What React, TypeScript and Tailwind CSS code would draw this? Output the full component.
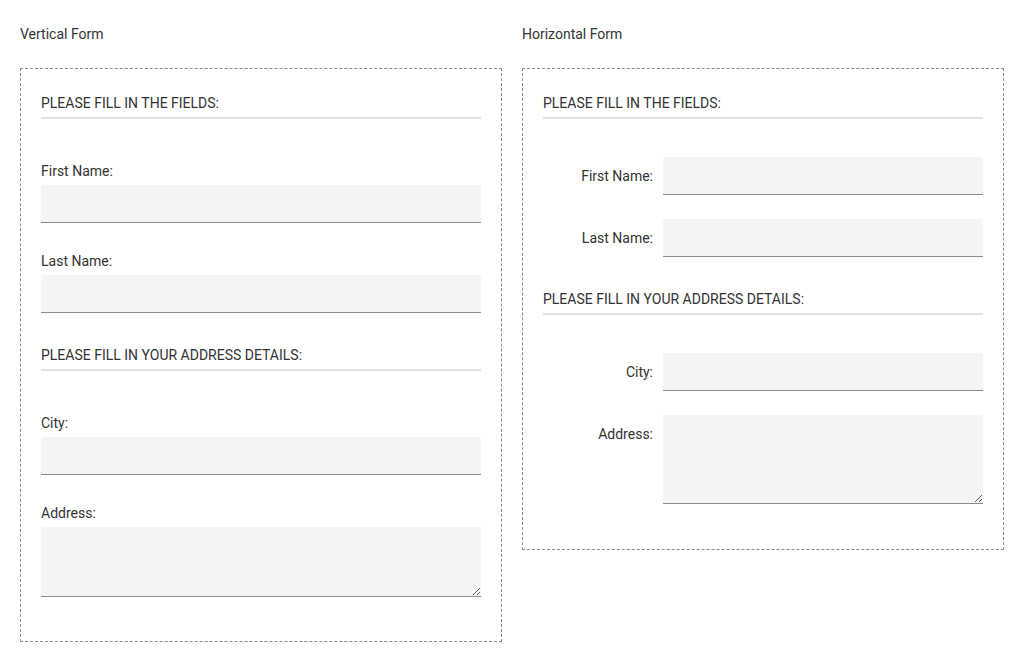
import React from 'react';

const inputCls =
  'block w-full h-[38px] bg-[#f4f4f4] rounded-t-[3px] border-b border-[#8d8d8d] px-3 text-sm outline-none';
const areaCls =
  'block w-full bg-[#f4f4f4] rounded-t-[3px] border-b border-[#8d8d8d] px-3 py-2 text-sm outline-none';

const Heading: React.FC<{ children: React.ReactNode; className?: string }> = ({ children, className = '' }) => (
  <div className={`leading-5 pb-[4px] border-b-2 border-[#e0e0e0] uppercase ${className}`}>{children}</div>
);

const VField: React.FC<{ label: string; area?: boolean; className?: string }> = ({ label, area, className = '' }) => (
  <div className={className}>
    <label className="block leading-5 mb-[4px]">{label}</label>
    {area ? <textarea className={`${areaCls} h-[70px]`} /> : <input className={inputCls} />}
  </div>
);

const HField: React.FC<{ label: string; area?: boolean; className?: string }> = ({ label, area, className = '' }) => (
  <div className={`flex items-start gap-[10px] ${className}`}>
    <label className="w-[110px] shrink-0 text-right leading-[38px]">{label}</label>
    {area ? <textarea className={`${areaCls} h-[89px]`} /> : <input className={inputCls} />}
  </div>
);

export default function App() {
  return (
    <div
      className="min-h-screen bg-white text-[#333] text-sm px-5 pt-6"
      style={{ fontFamily: 'Roboto, "Liberation Sans", sans-serif' }}
    >
      <div className="grid grid-cols-2 gap-5 items-start">
        <div>
          <div className="leading-5">Vertical Form</div>
          <div className="mt-6 border border-dashed border-[#8a8a8a] px-5 pt-6 pb-[44px]">
            <Heading>Please fill in the fields:</Heading>
            <VField label="First Name:" className="mt-[42px]" />
            <VField label="Last Name:" className="mt-[28px]" />
            <Heading className="mt-[32px]">Please fill in your address details:</Heading>
            <VField label="City:" className="mt-[42px]" />
            <VField label="Address:" area className="mt-[28px]" />
          </div>
        </div>
        <div>
          <div className="leading-5">Horizontal Form</div>
          <div className="mt-6 border border-dashed border-[#8a8a8a] px-5 pt-6 pb-[45px]">
            <Heading>Please fill in the fields:</Heading>
            <HField label="First Name:" className="mt-[38px]" />
            <HField label="Last Name:" className="mt-[24px]" />
            <Heading className="mt-[32px]">Please fill in your address details:</Heading>
            <HField label="City:" className="mt-[38px]" />
            <HField label="Address:" area className="mt-[24px]" />
          </div>
        </div>
      </div>
    </div>
  );
}
